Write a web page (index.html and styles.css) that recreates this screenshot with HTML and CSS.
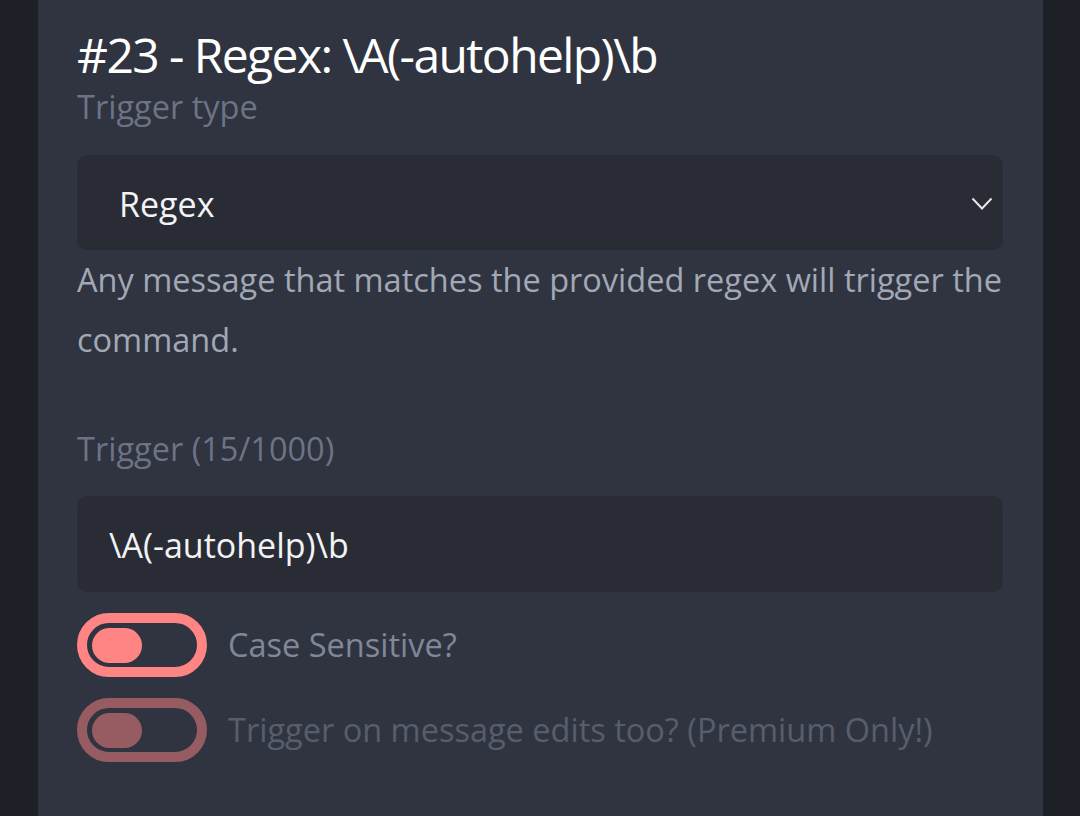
FILE: index.html
```html
<!DOCTYPE html>
<html>
<head>
<meta charset="utf-8">
<link rel="stylesheet" href="styles.css">
</head>
<body>
<div class="page">
  <main class="panel">
    <h1 class="title">#23 - Regex: \A(-autohelp)\b</h1>
    <div class="label">Trigger type</div>
    <div class="select">
      <span class="select-value">Regex</span>
      <svg class="chevron" width="22" height="14" viewBox="0 0 22 14"><path d="M1.5 1.5 L11 11.5 L20.5 1.5" fill="none" stroke="#e6e7ea" stroke-width="2"/></svg>
    </div>
    <p class="desc">Any message that matches the provided regex will trigger the command.</p>
    <div class="label label-trigger">Trigger (15/1000)</div>
    <div class="input">\A(-autohelp)\b</div>
    <div class="toggles">
      <div class="toggle-row">
        <span class="switch"><span class="knob"></span></span>
        <span class="toggle-text">Case Sensitive?</span>
      </div>
      <div class="toggle-row disabled">
        <span class="switch"><span class="knob"></span></span>
        <span class="toggle-text">Trigger on message edits too? (Premium Only!)</span>
      </div>
    </div>
  </main>
</div>
</body>
</html>
```
FILE: styles.css
```css
* { box-sizing: border-box; }
html, body {
  margin: 0;
  padding: 0;
  background: #1e2027;
  font-family: "Open Sans", "Noto Sans", sans-serif;
}
.page {
  min-height: 816px;
  padding: 0 37px 0 38px;
  display: flex;
}
.panel {
  flex: 1;
  min-height: 816px;
  background: #2f3440;
  padding: 28px 40px 0 39px;
  display: flex;
  flex-direction: column;
}
.title {
  margin: 0 0 3px;
  font-size: 48px;
  line-height: 54px;
  font-weight: 400;
  color: #ffffff;
  letter-spacing: -1.6px;
}
.label {
  font-size: 32.5px;
  line-height: 44px;
  color: #6d7384;
}
.select {
  margin-top: 26px;
  height: 95px;
  background: #292c35;
  border-radius: 10px;
  display: flex;
  align-items: center;
  justify-content: space-between;
  padding: 0 10px 0 42px;
}
.select-value {
  font-size: 34px;
  line-height: 44px;
  color: #f2f3f5;
  padding-top: 2px;
}
.chevron { margin-top: 2px; }
.desc {
  margin: 0;
  font-size: 32.5px;
  line-height: 60px;
  color: #a2a8b5;
}
.label-trigger { margin-top: 57px; }
.input {
  margin-top: 25px;
  height: 96px;
  background: #292c35;
  border-radius: 10px;
  display: flex;
  align-items: center;
  padding: 2px 0 0 32px;
  font-size: 34px;
  line-height: 44px;
  color: #f2f3f5;
}
.toggles {
  margin-top: 21px;
  display: flex;
  flex-direction: column;
  gap: 21px;
}
.toggle-row {
  display: flex;
  align-items: center;
  gap: 21px;
}
.toggle-row.disabled { opacity: 0.5; }
.switch {
  width: 130px;
  height: 64px;
  border: 10px solid #ff8585;
  border-radius: 32px;
  display: flex;
  align-items: flex-start;
  padding: 5px;
}
.knob {
  width: 50px;
  height: 35px;
  border-radius: 18px;
  background: #ff8585;
}
.toggle-text {
  font-size: 32.5px;
  line-height: 44px;
  color: #80879a;
}
```
